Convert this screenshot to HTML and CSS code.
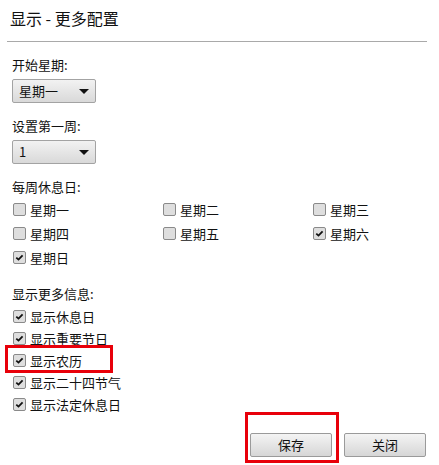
FILE: index.html
```html
<!DOCTYPE html>
<html lang="zh-CN">
<head>
<meta charset="utf-8">
<link rel="stylesheet" href="styles.css">
</head>
<body>
<div class="dialog">
  <h1 class="title">显示 - 更多配置</h1>
  <div class="rule"></div>

  <div class="field">
    <div class="label">开始星期:</div>
    <div class="select"><span>星期一</span><i class="arrow"></i></div>
  </div>

  <div class="field">
    <div class="label">设置第一周:</div>
    <div class="select"><span>1</span><i class="arrow"></i></div>
  </div>

  <div class="field">
    <div class="label">每周休息日:</div>
    <div class="grid">
      <div class="check"><span class="box"></span>星期一</div>
      <div class="check"><span class="box"></span>星期二</div>
      <div class="check"><span class="box"></span>星期三</div>
      <div class="check"><span class="box"></span>星期四</div>
      <div class="check"><span class="box"></span>星期五</div>
      <div class="check"><span class="box on"><svg viewBox="0 0 11 11"><path d="M2.3 5.6 L4.5 7.6 L8.6 3.4" /></svg></span>星期六</div>
      <div class="check"><span class="box on"><svg viewBox="0 0 11 11"><path d="M2.3 5.6 L4.5 7.6 L8.6 3.4" /></svg></span>星期日</div>
    </div>
  </div>

  <div class="field more">
    <div class="label">显示更多信息:</div>
    <div class="list">
      <div class="check"><span class="box on"><svg viewBox="0 0 11 11"><path d="M2.3 5.6 L4.5 7.6 L8.6 3.4" /></svg></span>显示休息日</div>
      <div class="check"><span class="box on"><svg viewBox="0 0 11 11"><path d="M2.3 5.6 L4.5 7.6 L8.6 3.4" /></svg></span>显示重要节日</div>
      <div class="check"><span class="box on"><svg viewBox="0 0 11 11"><path d="M2.3 5.6 L4.5 7.6 L8.6 3.4" /></svg></span>显示农历<span class="hl hl-lunar"></span></div>
      <div class="check"><span class="box on"><svg viewBox="0 0 11 11"><path d="M2.3 5.6 L4.5 7.6 L8.6 3.4" /></svg></span>显示二十四节气</div>
      <div class="check"><span class="box on"><svg viewBox="0 0 11 11"><path d="M2.3 5.6 L4.5 7.6 L8.6 3.4" /></svg></span>显示法定休息日</div>
    </div>
  </div>

  <div class="actions">
    <div class="btn">保存<span class="hl hl-save"></span></div>
    <div class="btn">关闭</div>
  </div>
</div>
</body>
</html>
```
FILE: styles.css
```css
html, body {
  margin: 0;
  padding: 0;
  background: #fff;
}
body {
  font-family: "Noto Sans CJK SC", "Liberation Sans", sans-serif;
  font-size: 13px;
  color: #111;
}
.dialog {
  width: 439px;
  height: 465px;
  box-sizing: border-box;
  padding: 8px 13px 0 12px;
  position: relative;
}
.title {
  margin: 0 0 0 -2px;
  font-size: 16px;
  font-weight: normal;
  line-height: 20px;
  color: #111;
}
.rule {
  height: 1px;
  background: #a9a9a9;
  margin: 13px -1px 0 -5px;
}
.field {
  margin-top: 14px;
}
.label {
  line-height: 17px;
  height: 17px;
  margin-bottom: 6px;
}
.select {
  box-sizing: content-box;
  width: 70px;
  height: 22px;
  line-height: 22px;
  border: 1px solid #a3a3a3;
  border-radius: 2px;
  background: linear-gradient(#f2f2f2, #d9d9d9);
  display: flex;
  align-items: center;
  justify-content: space-between;
  padding: 0 6px;
}
.arrow {
  width: 0;
  height: 0;
  border-left: 5px solid transparent;
  border-right: 5px solid transparent;
  border-top: 5px solid #111;
}
.grid {
  display: grid;
  grid-template-columns: 150px 150px 1fr;
  row-gap: 7px;
}
.field.more {
  margin-top: 19px;
}
.list {
  display: flex;
  flex-direction: column;
  gap: 5px;
}
.check {
  display: flex;
  align-items: center;
  height: 17px;
  line-height: 17px;
  gap: 4px;
  position: relative;
}
.box {
  width: 11px;
  height: 11px;
  border: 1px solid #8a8a8a;
  border-radius: 2px;
  background: #dedede;
  margin-left: 1px;
  display: flex;
}
.box svg {
  width: 11px;
  height: 11px;
}
.box svg path {
  fill: none;
  stroke: #111;
  stroke-width: 1.8;
}
.hl {
  position: absolute;
  border: 3px solid #e8000a;
  pointer-events: none;
}
.hl-lunar {
  left: -7px;
  top: -7px;
  width: 102px;
  height: 22px;
}
.actions {
  position: absolute;
  left: 250px;
  top: 433px;
  display: flex;
  gap: 12px;
}
.btn {
  width: 80px;
  height: 22px;
  border: 1px solid #9a9a9a;
  border-radius: 2px;
  background: linear-gradient(#f4f4f4, #d6d6d6);
  text-align: center;
  line-height: 22px;
  position: relative;
}
.hl-save {
  left: -6px;
  top: -22px;
  width: 88px;
  height: 45px;
}
```
